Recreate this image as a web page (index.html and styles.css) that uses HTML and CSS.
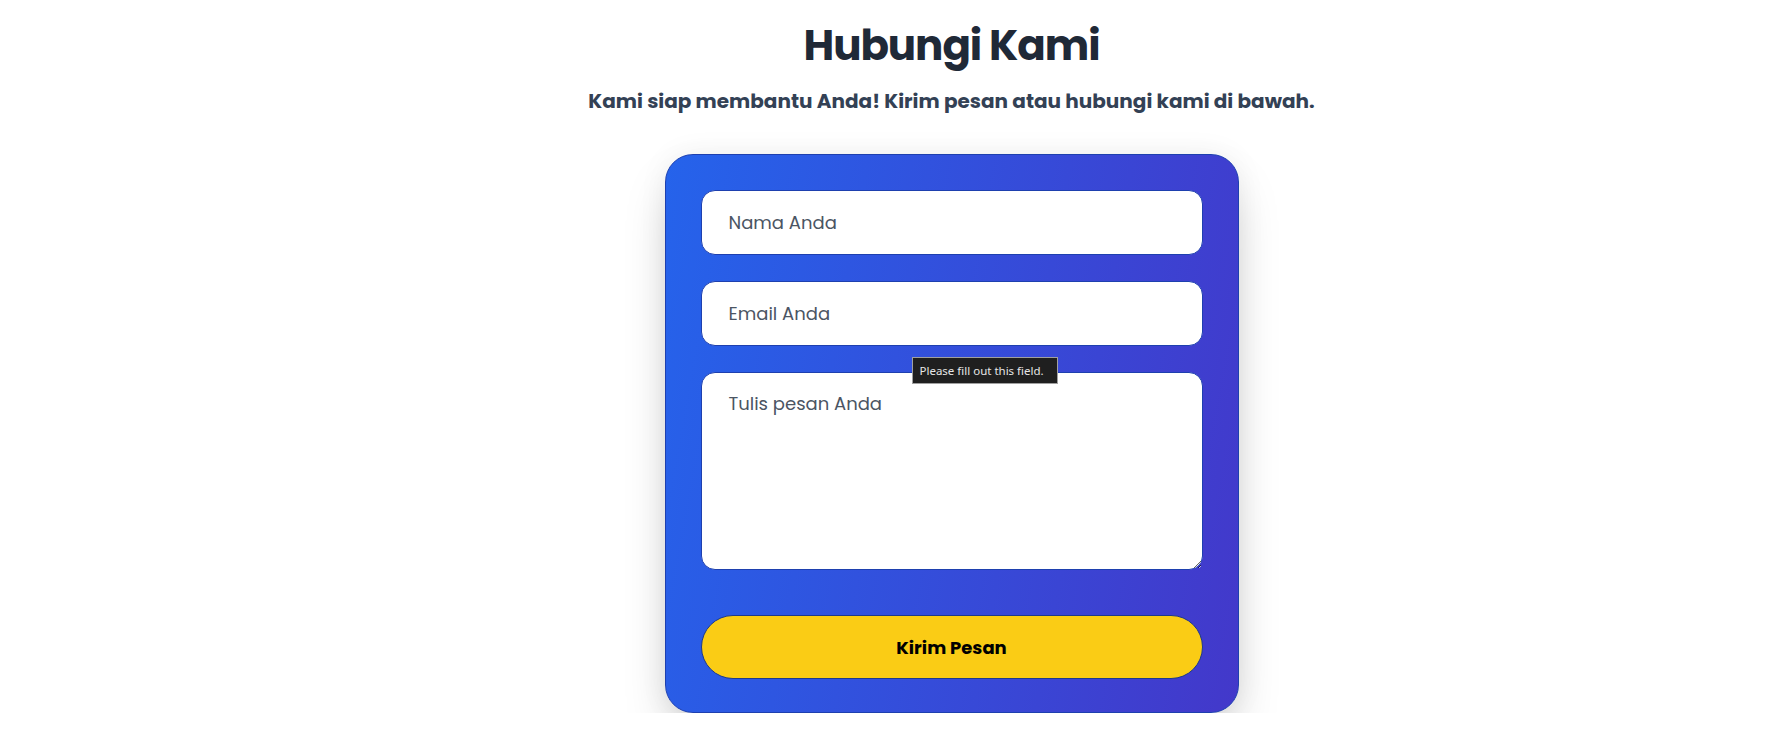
FILE: index.html
```html
<!DOCTYPE html>
<html lang="id">
<head>
<meta charset="utf-8">
<title>Hubungi Kami</title>
<link rel="stylesheet" href="styles.css">
</head>
<body>
<main class="page">
  <h1 class="title">Hubungi Kami</h1>
  <p class="subtitle">Kami siap membantu Anda! Kirim pesan atau hubungi kami di bawah.</p>
  <form class="card">
    <input class="field" type="text" placeholder="Nama Anda">
    <input class="field" type="email" placeholder="Email Anda">
    <textarea class="field area" placeholder="Tulis pesan Anda"></textarea>
    <button class="send" type="button">Kirim Pesan</button>
    <div class="tip">Please fill out this field.</div>
  </form>
</main>
</body>
</html>
```
FILE: styles.css
```css
* { box-sizing: border-box; }
html, body { margin: 0; padding: 0; background: #ffffff; }
body { font-family: "Poppins", "Open Sans", "Noto Sans", sans-serif; }
.page {
  display: flex;
  flex-direction: column;
  align-items: center;
  padding-left: 138px;
  padding-top: 21px;
}
.title {
  margin: 0;
  font-size: 42px;
  line-height: 50px;
  font-weight: 700;
  color: #1f2937;
  letter-spacing: -0.025em;
}
.subtitle {
  margin: 16px 0 0;
  font-size: 20px;
  line-height: 28px;
  font-weight: 700;
  color: #334155;
}
.card {
  position: relative;
  margin-top: 39px;
  width: 574px;
  padding: 35px 35px 33px;
  display: flex;
  flex-direction: column;
  border: 1px solid #1e40af;
  border-radius: 28px;
  background: linear-gradient(100deg, #2563eb 0%, #4338ca 100%);
  box-shadow: 0 25px 50px -12px rgba(0,0,0,0.25), 0 0 30px rgba(0,0,0,0.06);
}
.field {
  display: block;
  width: 100%;
  height: 65px;
  padding: 0 27px;
  border: 1px solid #1e40af;
  border-radius: 14px;
  background: #ffffff;
  font-family: inherit;
  font-size: 18px;
  color: #111827;
  outline: none;
}
.field + .field { margin-top: 26px; }
.field::placeholder { color: #4b5563; opacity: 1; }
.area {
  height: 198px;
  padding: 18px 27px;
  resize: vertical;
  line-height: 26px;
}
.send {
  margin-top: 45px;
  height: 64px;
  width: 100%;
  border: 1px solid #1e3a8a;
  border-radius: 32px;
  background: #facc15;
  font-family: inherit;
  font-size: 18px;
  font-weight: 700;
  color: #000000;
  cursor: pointer;
}
.tip {
  position: absolute;
  left: 246px;
  top: 202px;
  width: 146px;
  height: 27px;
  background: #1f1f1f;
  border: 1px solid #a0a0a0;
  color: #e6e6e6;
  font-family: "Noto Sans", "DejaVu Sans", sans-serif;
  font-size: 11.5px;
  line-height: 25px;
  padding: 0 7px;
  white-space: nowrap;
}
```
